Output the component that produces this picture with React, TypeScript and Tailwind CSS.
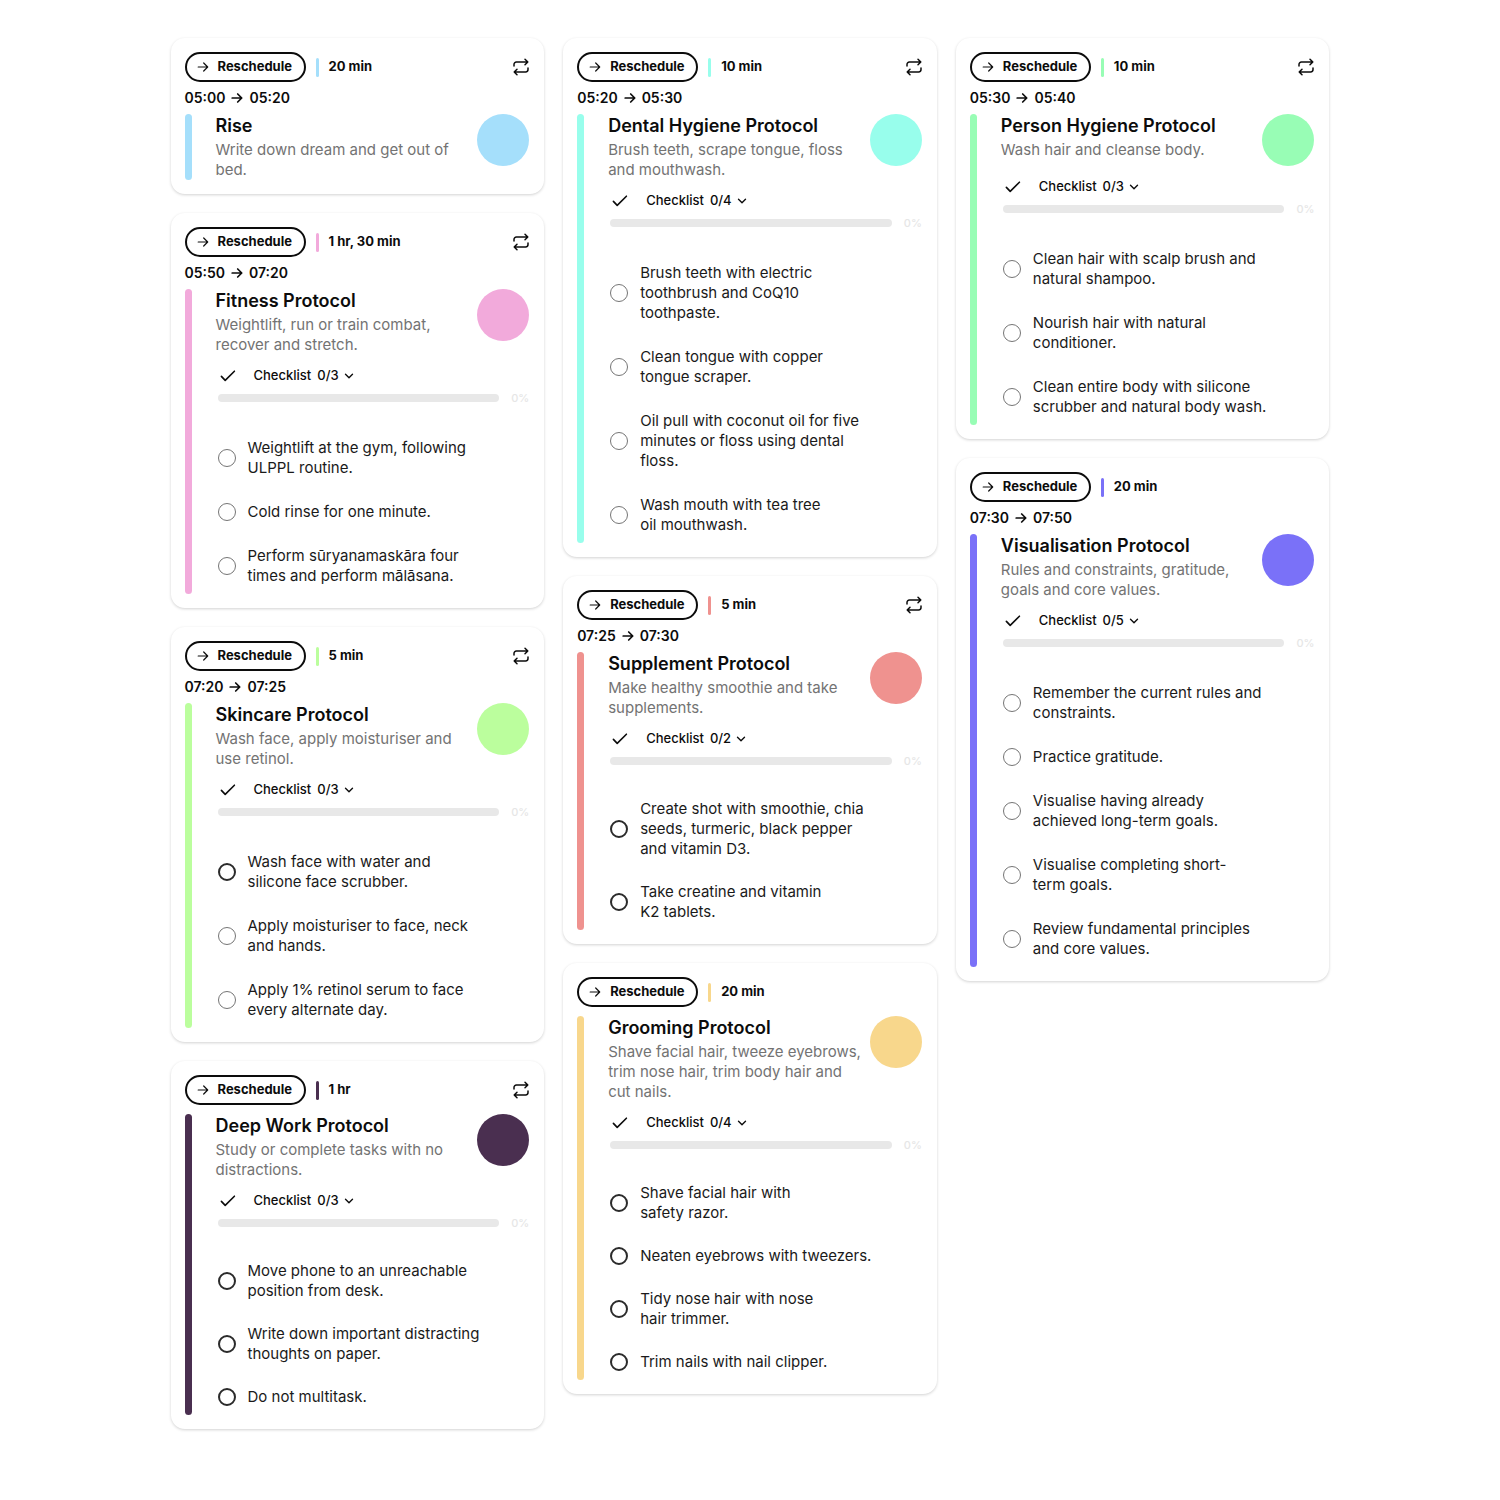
import React from "react";

type Protocol = {
  title: string;
  time?: string[];
  duration: string;
  desc: string;
  bg: string;
  items?: string[];
  ring?: string[];
  compact?: boolean;
  once?: boolean;
};

const THIN = "border border-[#757575]";
const BOLD = "border-2 border-[#2b2b2b]";

const columns: Protocol[][] = [
  [
    { title: "Rise", time: ["05:00", "05:20"], duration: "20 min", desc: "Write down dream and get out of\nbed.", bg: "bg-[#a5dffb]" },
    {
      title: "Fitness Protocol", time: ["05:50", "07:20"], duration: "1 hr, 30 min",
      desc: "Weightlift, run or train combat,\nrecover and stretch.", bg: "bg-[#f2aadb]",
      items: ["Weightlift at the gym, following\nULPPL routine.", "Cold rinse for one minute.", "Perform sūryanamaskāra four\ntimes and perform mālāsana."],
    },
    {
      title: "Skincare Protocol", time: ["07:20", "07:25"], duration: "5 min",
      desc: "Wash face, apply moisturiser and\nuse retinol.", bg: "bg-[#bbfe9d]",
      items: ["Wash face with water and\nsilicone face scrubber.", "Apply moisturiser to face, neck\nand hands.", "Apply 1% retinol serum to face\nevery alternate day."],
      ring: [BOLD, THIN, THIN],
    },
    {
      title: "Deep Work Protocol", duration: "1 hr",
      desc: "Study or complete tasks with no\ndistractions.", bg: "bg-[#4a2f50]",
      items: ["Move phone to an unreachable\nposition from desk.", "Write down important distracting\nthoughts on paper.", "Do not multitask."],
      ring: [BOLD, BOLD, BOLD], compact: true,
    },
  ],
  [
    {
      title: "Dental Hygiene Protocol", time: ["05:20", "05:30"], duration: "10 min",
      desc: "Brush teeth, scrape tongue, floss\nand mouthwash.", bg: "bg-[#98feec]",
      items: ["Brush teeth with electric\ntoothbrush and CoQ10\ntoothpaste.", "Clean tongue with copper\ntongue scraper.", "Oil pull with coconut oil for five\nminutes or floss using dental\nfloss.", "Wash mouth with tea tree\noil mouthwash."],
    },
    {
      title: "Supplement Protocol", time: ["07:25", "07:30"], duration: "5 min",
      desc: "Make healthy smoothie and take\nsupplements.", bg: "bg-[#ef928f]",
      items: ["Create shot with smoothie, chia\nseeds, turmeric, black pepper\nand vitamin D3.", "Take creatine and vitamin\nK2 tablets."],
      ring: [BOLD, BOLD], compact: true,
    },
    {
      title: "Grooming Protocol", duration: "20 min",
      desc: "Shave facial hair, tweeze eyebrows,\ntrim nose hair, trim body hair and\ncut nails.", bg: "bg-[#f8d78c]",
      items: ["Shave facial hair with\nsafety razor.", "Neaten eyebrows with tweezers.", "Tidy nose hair with nose\nhair trimmer.", "Trim nails with nail clipper."],
      ring: [BOLD, BOLD, BOLD, BOLD], compact: true, once: true,
    },
  ],
  [
    {
      title: "Person Hygiene Protocol", time: ["05:30", "05:40"], duration: "10 min",
      desc: "Wash hair and cleanse body.", bg: "bg-[#98fdb5]",
      items: ["Clean hair with scalp brush and\nnatural shampoo.", "Nourish hair with natural\nconditioner.", "Clean entire body with silicone\nscrubber and natural body wash."],
    },
    {
      title: "Visualisation Protocol", time: ["07:30", "07:50"], duration: "20 min",
      desc: "Rules and constraints, gratitude,\ngoals and core values.", bg: "bg-[#7a71f8]",
      items: ["Remember the current rules and\nconstraints.", "Practice gratitude.", "Visualise having already\nachieved long-term goals.", "Visualise completing short-\nterm goals.", "Review fundamental principles\nand core values."],
      once: true,
    },
  ],
];

function Arrow({ className, strokeWidth }: { className: string; strokeWidth: number }) {
  return (
    <svg viewBox="0 0 12 12" className={className} fill="none" stroke="currentColor" strokeWidth={strokeWidth} strokeLinecap="round" strokeLinejoin="round" aria-hidden="true">
      <path d="M1.2 6h9.4M6.7 2l4 4-4 4" />
    </svg>
  );
}

function RepeatIcon() {
  return (
    <svg viewBox="0 0 16 18" className="h-[18px] w-4" fill="none" stroke="currentColor" strokeWidth="1.5" strokeLinecap="round" strokeLinejoin="round" aria-hidden="true">
      <path d="M1 8V6.4a2.4 2.4 0 0 1 2.4-2.4h11.4M12 1.2 14.8 4 12 6.8" />
      <path d="M15 10v1.6a2.4 2.4 0 0 1-2.4 2.4H1.2M4 11.2 1.2 14 4 16.8" />
    </svg>
  );
}

function Card({ p }: { p: Protocol }) {
  return (
    <article className="rounded-[14px] bg-white py-[14px] pr-[15px] pl-[14px] shadow-[0_1px_3px_rgba(0,0,0,0.18)]">
      <header className="flex items-center">
        <button type="button" className="flex h-[30px] w-[121px] items-center gap-[9px] rounded-full border-2 border-[#0c0c0c] pl-[10px] text-[13px] font-bold">
          <Arrow className="size-3 shrink-0" strokeWidth={1.2} />
          Reschedule
        </button>
        <span className={`ml-[10px] h-[19px] w-[3px] rounded-full ${p.bg}`} />
        <span className="ml-[10px] text-[13px] font-bold">{p.duration}</span>
        {!p.once && (
          <button type="button" aria-label="Repeat" className="ml-auto">
            <RepeatIcon />
          </button>
        )}
      </header>
      {p.time && (
        <p className="mt-[6px] flex items-center gap-[6px] text-[14px] leading-5 font-semibold">
          {p.time[0]}
          <Arrow className="size-3" strokeWidth={1.7} />
          {p.time[1]}
        </p>
      )}
      <div className={`flex ${p.time ? "mt-[6px]" : "mt-[9px]"}`}>
        <span className={`w-[7px] shrink-0 rounded-full ${p.bg}`} />
        <div className="ml-6 min-w-0 grow">
          <div className="flex justify-between">
            <div>
              <h2 className="text-[18px] leading-6 font-semibold whitespace-nowrap">{p.title}</h2>
              <p className="mt-[2px] text-[15px] leading-5 whitespace-pre text-[#737373]">{p.desc}</p>
            </div>
            <span className={`size-[52px] shrink-0 rounded-full ${p.bg}`} />
          </div>
          {p.items && (
            <section className="pb-2 pl-[2px]">
              <button type="button" className="mt-[11px] flex h-5 items-center text-[13px] font-medium">
                <svg viewBox="0 0 16 14" className="ml-[2px] h-[14px] w-4" fill="none" stroke="currentColor" strokeWidth="1.6" strokeLinecap="round" strokeLinejoin="round" aria-hidden="true">
                  <path d="m1.4 7.4 3.8 4L14.4 2.2" />
                </svg>
                <span className="ml-[18px]">Checklist</span>
                <span className="ml-[6px]">0/{p.items.length}</span>
                <svg viewBox="0 0 10 10" className="ml-[5px] size-[10px]" fill="none" stroke="currentColor" strokeWidth="1.4" strokeLinecap="round" strokeLinejoin="round" aria-hidden="true">
                  <path d="m1.5 3.2 3.5 3.5 3.5-3.5" />
                </svg>
              </button>
              <div className="mt-1 flex h-4 items-center gap-3">
                <div className="h-2 grow rounded-full bg-[#e8e8e8]" />
                <span className="text-[11px] leading-4 font-medium text-[#e6e6e6]">0%</span>
              </div>
              <ul className={`flex flex-col ${p.compact ? "mt-[30px] gap-[23px]" : "mt-8 gap-6"}`}>
                {p.items.map((item, i) => (
                  <li key={item}>
                    <label className="flex items-center gap-3 text-[15px] leading-5 whitespace-pre text-[#1a1a1a]">
                      <input type="checkbox" className={`size-[18px] shrink-0 appearance-none rounded-full bg-white ${p.ring?.[i] ?? THIN}`} />
                      {item}
                    </label>
                  </li>
                ))}
              </ul>
            </section>
          )}
        </div>
      </div>
    </article>
  );
}

export default function App() {
  return (
    <main className="min-h-screen bg-white px-4 py-[38px] font-['Inter','Liberation_Sans',sans-serif] text-[#0c0c0c]">
      <div className="mx-auto grid max-w-[1159px] grid-cols-1 items-start gap-[19px] md:grid-cols-2 lg:grid-cols-3">
        {columns.map((cards, i) => (
          <div key={i} className="flex flex-col gap-[19px]">
            {cards.map((p) => (
              <Card key={p.title} p={p} />
            ))}
          </div>
        ))}
      </div>
    </main>
  );
}
